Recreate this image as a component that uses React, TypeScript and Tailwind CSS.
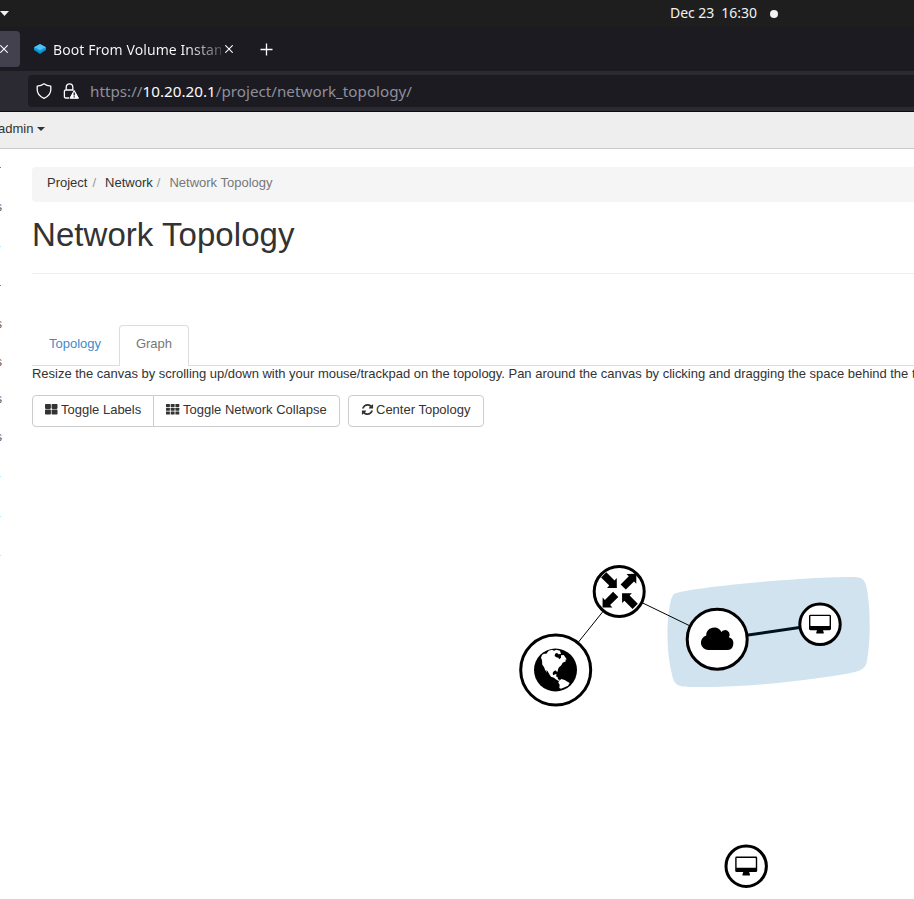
import React from "react";

function Sync() {
  return (
    <svg className="h-[13px] w-[13px]" viewBox="64 0 1664 1792" fill="currentColor">
      <path d="M1639 1056q0 5-1 7-64 268-268 434.500t-478 166.500q-146 0-282.500-55t-243.500-157l-129 129q-19 19-45 19t-45-19-19-45v-448q0-26 19-45t45-19h448q26 0 45 19t19 45-19 45l-137 137q71 66 161 102t187 36q134 0 250-65t186-179q11-17 53-117 8-23 30-23h192q13 0 22.500 9.500t9.500 22.500zm25-800v448q0 26-19 45t-45 19h-448q-26 0-45-19t-19-45 19-45l138-138q-148-137-349-137-134 0-250 65t-186 179q-11 17-53 117-8 23-30 23h-199q-13 0-22.500-9.500t-9.500-22.500v-7q65-268 270-434.500t480-166.500q146 0 284 55.500t245 156.500l130-129q19-19 45-19t45 19 19 45z" />
    </svg>
  );
}

function Squares() {
  return (
    <svg width="13" height="11" viewBox="0 0 13 11" fill="currentColor">
      {[0, 6.6].map((x) => [0, 5.6].map((y) => <rect key={`${x}-${y}`} x={x} y={y} width="5.900" height="4.900" rx="0.800" />))}
    </svg>
  );
}

function Grid() {
  return (
    <svg width="14" height="11" viewBox="0 0 14 11" fill="currentColor">
      {[0, 4.7, 9.4].map((x) => [0, 3.8, 7.6].map((y) => <rect key={`${x}-${y}`} x={x} y={y} width="3.900" height="3" rx="0.500" />))}
    </svg>
  );
}

function CloseIcon() {
  return (
    <svg width="8" height="8" viewBox="0 0 8 8" stroke="currentColor" strokeWidth="1.1">
      <path d="M.3 .3 7.7 7.7M7.7 .3 .3 7.7" />
    </svg>
  );
}

function TopBar() {
  return (
    <div className="flex h-[27px] items-center bg-[#1e1e1e] text-[#f2f2f2]">
      <svg className="h-[5px] w-[9px]" viewBox="0 0 9 5" fill="currentColor">
        <path d="M0 0h9L4.500 5z" />
      </svg>
      <span className="ml-[661px] w-[87px] pb-[2px] whitespace-pre text-[14px] leading-none tracking-[-0.05px]">Dec 23  16:30</span>
      <span className="ml-[13px] h-2 w-2 rounded-full bg-[#f2f2f2]" />
    </div>
  );
}

function Tabs() {
  return (
    <div className="flex h-11 items-start bg-[#1c1b22] pt-1 text-[#fbfbfe]">
      <div className="flex h-9 w-5 items-center rounded-r bg-[#42414d]">
        <CloseIcon />
      </div>
      <div className="flex h-9 items-center">
        <svg className="ml-[14px] h-[10px] w-3" viewBox="0 0 12 10">
          <path d="M6 0 12 3.200v2.800L6 10 0 6V3.200z" fill="#0787cf" />
          <path d="M6 0 12 3.200 6 6.500 0 3.200z" fill="#4cc3f2" />
          <path d="M0 3.200 6 6.500 12 3.200V5L6 8.500 0 5z" fill="#149bdc" />
        </svg>
        <span className="ml-[7px] w-[168px] overflow-hidden bg-gradient-to-r from-[#fbfbfe] from-80% to-[#fbfbfe]/25 bg-clip-text text-[14px] tracking-[0.08px] whitespace-nowrap text-transparent">
          Boot From Volume Instan
        </span>
        <span className="ml-1">
          <CloseIcon />
        </span>
        <svg className="ml-[27px] h-[13px] w-[13px]" viewBox="0 0 13 13" stroke="currentColor" strokeWidth="1.300">
          <path d="M6.500 .5v12M.5 6.500h12" />
        </svg>
      </div>
    </div>
  );
}

function AddressBar() {
  return (
    <div className="h-[41px] border-b border-[#0c0c0d] bg-[#2b2a33] pt-1 pl-7">
      <div className="flex h-8 items-center rounded-l bg-[#1c1b22] text-[#fbfbfe]">
        <svg className="ml-2 h-4 w-4" viewBox="0 0 16 16" fill="none" stroke="currentColor" strokeWidth="1.300" strokeLinejoin="round">
          <path d="M8 .8C6 2.300 3.800 2.900 1.200 3.200v3.300C1.200 10.500 3.800 13.500 8 15.300c4.200-1.800 6.800-4.800 6.800-8.800V3.200C12.200 2.900 10 2.300 8 .8z" />
        </svg>
        <svg className="ml-[11px] h-4 w-4" viewBox="0 0 16 16" fill="none" stroke="currentColor" strokeWidth="1.300">
          <path d="M3.200 7V4.200a3.300 3.400 0 0 1 6.600 0V7M6 15H2.600A1.200 1.200 0 0 1 1.400 13.800V8.200A1.200 1.200 0 0 1 2.600 7h8" />
          <path d="M11.200 7.500 15.500 15.300H6.900z" fill="currentColor" stroke="currentColor" strokeWidth="1" strokeLinejoin="round" />
          <path d="M11.200 9.500v3M11.200 13.300v1.200" stroke="#1c1b22" />
        </svg>
        <span className="ml-[11px] text-[15.2px] tracking-[0.02px] whitespace-nowrap text-[#8f8f9d]">
          https://<span className="text-[#fbfbfe]">10.20.20.1</span>/project/network_topology/
        </span>
      </div>
    </div>
  );
}

const clippedItems = [
  { top: 201, kind: "s" },
  { top: 318, kind: "s" },
  { top: 356, kind: "s" },
  { top: 393, kind: "s" },
  { top: 431, kind: "s" },
];
const clippedMarks = [
  { top: 167, tone: "bg-[#428bca]" },
  { top: 246, tone: "bg-[#aee6fb]" },
  { top: 285, tone: "bg-[#428bca]" },
  { top: 476, tone: "bg-[#aee6fb]" },
  { top: 516, tone: "bg-[#aee6fb]" },
  { top: 555, tone: "bg-[#aee6fb]" },
];

function SideEdge() {
  return (
    <>
      {clippedItems.map((i) => (
        <span key={i.top} className="absolute -left-[4px] text-[12px] leading-[12px] text-[#555]" style={{ top: i.top }}>
          {i.kind}
        </span>
      ))}
      {clippedMarks.map((m) => (
        <span key={m.top} className={`absolute left-0 h-px w-px ${m.tone}`} style={{ top: m.top }} />
      ))}
    </>
  );
}

function Monitor({ x, y }: { x: number; y: number }) {
  return (
    <g transform={`translate(${x} ${y})`}>
      <circle r="20.200" fill="#fff" stroke="#000" strokeWidth="3" />
      <rect x="-11" y="-9.600" width="22" height="15.500" rx="1.400" />
      <rect x="-9.600" y="-8.200" width="19.200" height="9.800" rx="0.400" fill="#fff" />
      <path d="M-2.900 5.500H2.900L3.700 8.200V9.200H-3.700V8.200z" />
    </g>
  );
}

const arrow = "M-3.700 -9.200H3.700V2.400H6.900L0 9.400 -6.900 2.400H-3.700z";

function Graph() {
  return (
    <svg className="block" width="914" height="472" viewBox="0 427 914 472">
      <path
        d="M673.500 594.500C680 588 800 577 852 577C862 577 864.500 579 866.500 587C870.800 608 870.800 643 866.500 663C865 668 862 671 848 673.500C800 682 740 687.500 695 687C679 687 675 686 672.500 677C666 652 666 620 671 600C671.500 598 672 597 673.500 594.500Z"
        fill="#d1e3ef"
      />
      <g stroke="#000">
        <path d="M556 670 619 591.500 717 639" strokeWidth="1" fill="none" />
        <path d="M717 639.500 820 624.500" stroke="#00111f" strokeWidth="3" />
      </g>
      <circle cx="555.700" cy="670" r="35" fill="#fff" stroke="#000" strokeWidth="3" />
      <circle cx="555.500" cy="670" r="21.500" />
      <g transform="translate(530 645) scale(.33333)" fill="#fff">
        <path d="M33 38 36 30 42 26 49 26 56 17 66 14 72 17 79 14 90 17 93 27 85 28 81 23 75 27 74 33 79 37 85 38 88 43 93 38 93 31 101 30 106 37 110 43 105 45 109 48 98 53 94 61 87 67 84 73 83 80 79 79 76 76 70 80 68 85 69 89 72 91 74 88 80 88 78 94 83 97 84 103 90 105 86 108 77 103 72 98 63 95 58 88 53 79 49 75 51 83 45 74 42 66 37 59 36 46z" />
        <path d="M87 108 94 102 104 105 110 109 119 114 114 122 104 127 93 131 88 129 89 119 85 113z" />
      </g>
      <circle cx="619.200" cy="591.500" r="25" fill="#fff" stroke="#000" strokeWidth="3" />
      <path transform="translate(610.200 581.300) rotate(-45)" d={arrow} />
      <path transform="translate(629.700 580.500) rotate(-135)" d={arrow} />
      <path transform="translate(609.200 600.800) rotate(45)" d={arrow} />
      <path transform="translate(628.700 599.900) rotate(135)" d={arrow} />
      <circle cx="717.200" cy="639.200" r="30" fill="#fff" stroke="#000" strokeWidth="3" />
      <path d="M708.500 650A7.400 7.400 0 0 1 706.200 635.500A8 8 0 0 1 721.400 632A4.100 4.100 0 0 1 728.800 637.300A6.500 6.500 0 0 1 727 650Z" />
      <Monitor x={820} y={624.300} />
      <Monitor x={746.200} y={866.200} />
    </svg>
  );
}

export default function App() {
  return (
    <div className="relative h-[899px] w-[914px] overflow-hidden bg-white font-['Liberation_Sans',Arial,sans-serif] text-[13px] text-[#333]">
      <header className="font-['Noto_Sans',sans-serif]">
        <TopBar />
        <Tabs />
        <AddressBar />
      </header>
      <nav className="flex h-[37px] items-center border-b border-[#c8c8c8] bg-[#eee] pb-[3px]">
        <span className="-ml-[2px]">admin</span>
        <span className="ml-1 border-x-4 border-t-4 border-x-transparent border-t-[#333]" />
      </nav>
      <main>
        <div className="pl-8">
          <div className="mt-[18px] flex h-[35px] items-center rounded-l bg-[#f5f5f5] pb-[3px] pl-[15px]">
            <span>Project</span>
            <span className="px-[5px] text-[#999]">/</span>
            <span className="ml-1">Network</span>
            <span className="pr-[5px] pl-1 text-[#999]">/</span>
            <span className="ml-1 text-[#777]">Network Topology</span>
          </div>
          <h1 className="mt-[15px] h-[57px] border-b border-[#eee] text-[33px] leading-[36px] tracking-[0.05px]">Network Topology</h1>
          <div className="mt-[51px] flex h-[41px] border-b border-[#ddd]">
            <span className="w-[87px] pt-[10px] pl-[17px] leading-[18px] text-[#428bca]">Topology</span>
            <span className="h-[41px] w-[70px] rounded-t border border-b-0 border-[#ddd] bg-white pt-[9px] text-center leading-[18px] text-[#777]">Graph</span>
          </div>
          <p className="h-[29px] leading-[16px] tracking-[-0.02px] whitespace-nowrap">
            Resize the canvas by scrolling up/down with your mouse/trackpad on the topology. Pan around the canvas by clicking and dragging the space behind the topology.
          </p>
          <div className="flex h-8 leading-[18px]">
            <button className="flex w-[122px] items-center gap-[3px] rounded-l border border-[#ccc] pb-[3px] pl-3 whitespace-nowrap">
              <Squares />
              Toggle Labels
            </button>
            <button className="-ml-px flex w-[187px] items-center gap-[3px] rounded-r border border-[#ccc] pb-[3px] pl-3 whitespace-nowrap">
              <Grid />
              Toggle Network Collapse
            </button>
            <button className="ml-2 flex w-[136px] items-center gap-[2px] rounded border border-[#ccc] pb-[3px] pl-3 whitespace-nowrap">
              <Sync />
              Center Topology
            </button>
          </div>
        </div>
        <Graph />
      </main>
      <SideEdge />
    </div>
  );
}
